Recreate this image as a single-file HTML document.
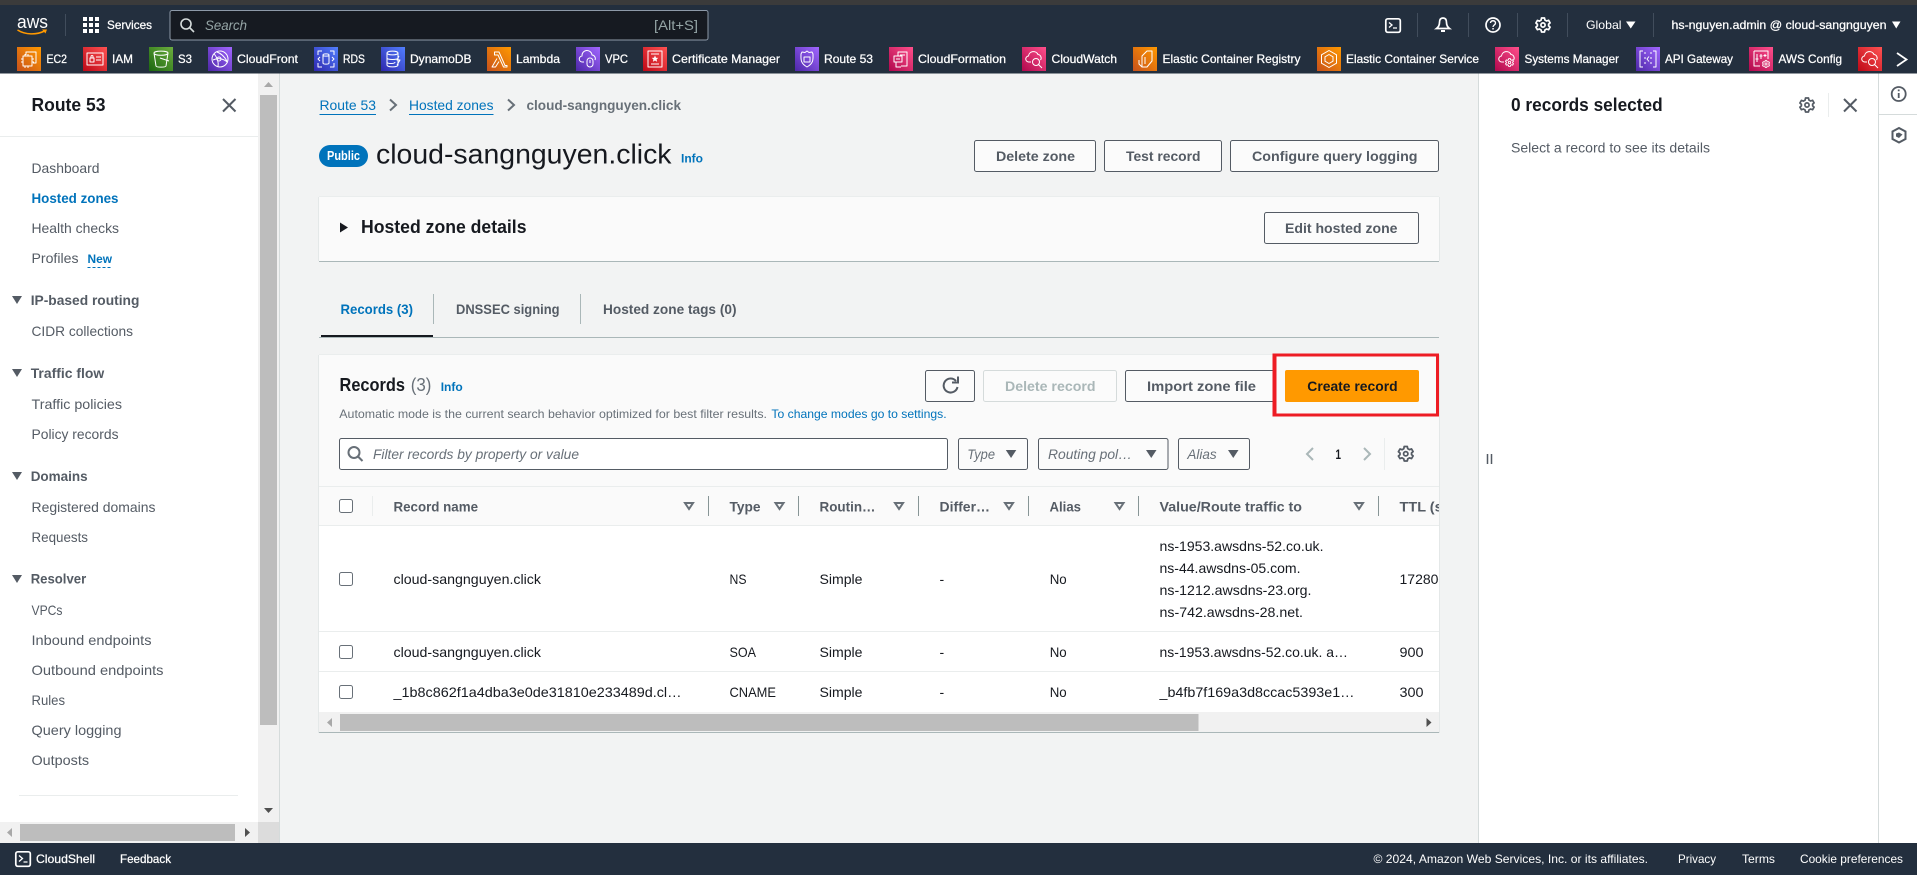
<!DOCTYPE html>
<html lang="en"><head><meta charset="utf-8"><title>Route 53 - Hosted zones</title>
<style>
html,body{margin:0;padding:0;width:1917px;height:875px;overflow:hidden;background:#f2f3f3}
svg{display:block;font-family:"Liberation Sans",Arial,sans-serif}
text{white-space:pre}
.w{fill:#fff;font-size:12px;font-weight:400;stroke:#fff;stroke-width:.25px}
.wn{fill:#fff;font-size:12px}
.n{fill:#545b64;font-size:14px}
.g{fill:#545b64;font-size:14px;font-weight:700}
.b{fill:#0073bb;font-size:14px}
.bb{fill:#0073bb;font-size:14px;font-weight:700}
.i{fill:#0073bb;font-size:12px;font-weight:700}
.h{fill:#16191f;font-size:18px;font-weight:700}
.t{fill:#16191f;font-size:14px}
.th{fill:#545b64;font-size:14px;font-weight:700}
.ph{fill:#687078;font-size:14px;font-style:italic}
.ic{fill:none;stroke:#fff;stroke-width:1;stroke-linejoin:round}
.btn{fill:#fbfbfb;stroke:#545b64;stroke-width:1}
.sep{stroke:#eaeded;stroke-width:1}
.dv{stroke:#879596;stroke-width:1}
.cb{fill:#fff;stroke:#687078;stroke-width:1}
.so{fill:none;stroke:#687078;stroke-width:2}
.ca{fill:#545b64}
</style></head><body>
<svg width="1917" height="875" viewBox="0 0 1917 875" xmlns="http://www.w3.org/2000/svg">
<defs>
<linearGradient id="o" x1="0" y1="1" x2="1" y2="0"><stop offset="0" stop-color="#c8511b"/><stop offset="1" stop-color="#ff9900"/></linearGradient>
<linearGradient id="r" x1="0" y1="1" x2="1" y2="0"><stop offset="0" stop-color="#bd0816"/><stop offset="1" stop-color="#ff5252"/></linearGradient>
<linearGradient id="e" x1="0" y1="1" x2="1" y2="0"><stop offset="0" stop-color="#1b660f"/><stop offset="1" stop-color="#6cae3e"/></linearGradient>
<linearGradient id="p" x1="0" y1="1" x2="1" y2="0"><stop offset="0" stop-color="#4d27a8"/><stop offset="1" stop-color="#a166ff"/></linearGradient>
<linearGradient id="u" x1="0" y1="1" x2="1" y2="0"><stop offset="0" stop-color="#2e27ad"/><stop offset="1" stop-color="#527fff"/></linearGradient>
<linearGradient id="k" x1="0" y1="1" x2="1" y2="0"><stop offset="0" stop-color="#b0084d"/><stop offset="1" stop-color="#ff4f8b"/></linearGradient>
<clipPath id="cardclip"><rect x="319" y="355" width="1120" height="378"/></clipPath>
<symbol id="gear" viewBox="0 0 16 16"><path d="M6.5 1h3l.4 2 1.7 1 2-.7 1.5 2.6-1.500 1.3v1.600l1.500 1.300-1.500 2.600-2-.7-1.700 1-.4 2h-3l-.4-2-1.700-1-2 .7L.9 10.200l1.500-1.300V7.300L.9 6l1.500-2.600 2 .7 1.700-1z" fill="none" stroke="currentColor" stroke-width="1.700" stroke-linejoin="round"/><circle cx="8" cy="8" r="2.100" fill="none" stroke="currentColor" stroke-width="1.700"/></symbol>
<symbol id="cw" viewBox="0 0 24 24"><path class="ic" d="M9 15H7a3 3 0 0 1-.5-6A5 5 0 0 1 16 7.500a3.500 3.500 0 0 1 2.500 5.500"/></symbol>
</defs>

<!-- page -->
<rect width="1917" height="875" fill="#f2f3f3"/>
<rect width="1917" height="5" fill="#3b3b3b"/>
<!-- top nav -->
<rect y="5" width="1917" height="68.500" fill="#232f3e"/>
<text x="17" y="28" fill="#fff" font-size="18" textLength="31" lengthAdjust="spacingAndGlyphs">aws</text>
<path d="M17.500 30c8 5 19 5 27 1" fill="none" stroke="#ff9900" stroke-width="1.600"/><path d="M42 29.500l5 0-1.500 4z" fill="#ff9900"/>
<path d="M65.500 14v22" stroke="#414d5c"/>
<g fill="#fff"><rect x="83" y="17" width="4" height="4"/><rect x="89" y="17" width="4" height="4"/><rect x="95" y="17" width="4" height="4"/><rect x="83" y="23" width="4" height="4"/><rect x="89" y="23" width="4" height="4"/><rect x="95" y="23" width="4" height="4"/><rect x="83" y="29" width="4" height="4"/><rect x="89" y="29" width="4" height="4"/><rect x="95" y="29" width="4" height="4"/></g>
<text class="w" x="107" y="29" textLength="45" lengthAdjust="spacingAndGlyphs">Services</text>
<rect x="170" y="10.500" width="538" height="29.500" rx="2" fill="#161a21" stroke="#8d99a8"/>
<circle cx="186" cy="24" r="5" fill="none" stroke="#d5dbdb" stroke-width="1.600"/><path d="M190 28l4 4" stroke="#d5dbdb" stroke-width="1.600"/>
<text x="205" y="30" fill="#95a5a6" font-size="14" font-style="italic" textLength="42" lengthAdjust="spacingAndGlyphs">Search</text>
<text x="654" y="30" fill="#95a5a6" font-size="14" textLength="44" lengthAdjust="spacingAndGlyphs">[Alt+S]</text>

<rect x="1385.800" y="18.800" width="14.500" height="13.500" rx="2" fill="none" stroke="#fff" stroke-width="1.700"/><path d="M1389 22.500l3 2.500-3 2.500M1393 28h4" fill="none" stroke="#fff" stroke-width="1.300"/>
<path d="M1417.500 13v24M1468.500 13v24M1517.500 13v24M1567.500 13v24M1653.500 13v24" stroke="#414d5c"/>
<path d="M1443 18c-2.500 0-3.500 2-3.500 4.500 0 3-1 4.500-3 6h13c-2-1.500-3-3-3-6 0-2.500-1-4.500-3.500-4.500z" fill="none" stroke="#fff" stroke-width="1.700"/><path d="M1441 31h4" stroke="#fff" stroke-width="2"/>
<circle cx="1493" cy="25" r="7" fill="none" stroke="#fff" stroke-width="1.700"/><path d="M1490.500 23c0-3 5-3 5 0 0 2-2.500 2-2.500 4" fill="none" stroke="#fff" stroke-width="1.400"/><rect x="1492.300" y="28" width="1.500" height="1.500" fill="#fff"/>
<use href="#gear" x="1535" y="17" width="16" height="16" color="#fff"/>
<text class="wn" x="1586" y="29" textLength="35.500" lengthAdjust="spacingAndGlyphs">Global</text>
<path d="M1626 21.500h9.500l-4.750 7z" fill="#fff"/>
<text class="w" x="1671.500" y="29" textLength="215" lengthAdjust="spacingAndGlyphs">hs-nguyen.admin @ cloud-sangnguyen</text>
<path d="M1892 21.500h8.500l-4.250 7z" fill="#fff"/>

<!-- favorites -->
<g transform="translate(17,47)"><rect width="24" height="24" fill="url(#o)"/><path class="ic" d="M9 8V5h10v11h-3M6 9h9v10H6zM8 7v2M11 7v2M8 19v2M11 19v2M4 12h2M4 15h2M15 12h2M15 15h2"/></g>
<text class="w" x="46.500" y="63" textLength="20.500" lengthAdjust="spacingAndGlyphs">EC2</text>
<g transform="translate(83,47)"><rect width="24" height="24" fill="url(#r)"/><path class="ic" d="M4 6h16v12H4zM7 11h4v4H7zM8 11V9.500a1 1 0 0 1 2 0V11M13 10h5M13 13h5"/></g>
<text class="w" x="112" y="63" textLength="21" lengthAdjust="spacingAndGlyphs">IAM</text>
<g transform="translate(149,47)"><rect width="24" height="24" fill="url(#e)"/><path class="ic" d="M5 6c0 3 14 3 14 0M5 6c0-2.500 14-2.500 14 0l-2 13c-.5 1.500-9.500 1.500-10 0zM11 11l9 3"/></g>
<text class="w" x="178" y="63" textLength="14" lengthAdjust="spacingAndGlyphs">S3</text>
<g transform="translate(208,47)"><rect width="24" height="24" fill="url(#p)"/><circle class="ic" cx="12" cy="12" r="8"/><path class="ic" d="M6 6.500c3 4 5 8 4 13M9 5c3 1 7 4 10 9M5 13c4-2 10-2 14 2"/><circle class="ic" cx="11" cy="12" r="2"/></g>
<text class="w" x="237" y="63" textLength="61" lengthAdjust="spacingAndGlyphs">CloudFront</text>
<g transform="translate(314,47)"><rect width="24" height="24" fill="url(#u)"/><path class="ic" d="M4 8V4h4M16 4h4v4M20 16v4h-4M8 20H4v-4M9 8c0-1.500 6-1.500 6 0v8c0 1.500-6 1.500-6 0zM9 8c0 1.500 6 1.500 6 0M6 10l-2 2 2 2M18 10l2 2-2 2"/></g>
<text class="w" x="343" y="63" textLength="22" lengthAdjust="spacingAndGlyphs">RDS</text>
<g transform="translate(381,47)"><rect width="24" height="24" fill="url(#u)"/><path class="ic" d="M6 6c0-2.500 11-2.500 11 0v12c0 2.500-11 2.500-11 0zM6 6c0 2.500 11 2.500 11 0M6 11c0 2 11 2 11 0M6 15c0 2 8 2 8 0M18 9l-2 4h3l-3 5"/></g>
<text class="w" x="410" y="63" textLength="61.500" lengthAdjust="spacingAndGlyphs">DynamoDB</text>
<g transform="translate(487,47)"><rect width="24" height="24" fill="url(#o)"/><path class="ic" d="M7.500 5H12l6 13.500h2V20h-3.500L11 8H7.500zM10 11.500 5 20h3.500l3.500-5.500"/></g>
<text class="w" x="516" y="63" textLength="44" lengthAdjust="spacingAndGlyphs">Lambda</text>
<g transform="translate(576,47)"><rect width="24" height="24" fill="url(#p)"/><path class="ic" d="M8 15H6.500a3 3 0 0 1-.5-6 5 5 0 0 1 10-1 3.500 3.500 0 0 1 3 5"/><rect class="ic" x="11" y="11" width="6" height="9" rx="3"/><path class="ic" d="M14 13v3"/></g>
<text class="w" x="605" y="63" textLength="23" lengthAdjust="spacingAndGlyphs">VPC</text>
<g transform="translate(643,47)"><rect width="24" height="24" fill="url(#r)"/><path class="ic" d="M5 4h14v16H5zM8 7h8M8 17h8"/><path d="M12 8.500l1 2.200 2.300.2-1.700 1.500.5 2.300-2.100-1.200-2.100 1.200.5-2.300-1.700-1.500 2.300-.2z" fill="#fff"/></g>
<text class="w" x="672" y="63" textLength="108" lengthAdjust="spacingAndGlyphs">Certificate Manager</text>
<g transform="translate(795,47)"><rect width="24" height="24" fill="url(#p)"/><path class="ic" d="M12 4l2 1.500 3-.5 1 2c0 5 1 9-6 13-7-4-6-8-6-13l1-2 3 .5z"/><path class="ic" d="M9 10h6v5H9z"/></g>
<text class="w" x="824" y="63" textLength="49" lengthAdjust="spacingAndGlyphs">Route 53</text>
<g transform="translate(889,47)"><rect width="24" height="24" fill="url(#k)"/><path class="ic" d="M9 9V5h9v14h-6M5 9h8v6H5zM7 15v5h5M7 12h4M11 8h5"/></g>
<text class="w" x="918" y="63" textLength="88" lengthAdjust="spacingAndGlyphs">CloudFormation</text>
<g transform="translate(1022,47)"><rect width="24" height="24" fill="url(#k)"/><use href="#cw" width="24" height="24"/><circle class="ic" cx="14" cy="15" r="3.500"/><path class="ic" d="M16.500 17.500L20 21"/></g>
<text class="w" x="1051.500" y="63" textLength="65.500" lengthAdjust="spacingAndGlyphs">CloudWatch</text>
<g transform="translate(1133,47)"><rect width="24" height="24" fill="url(#o)"/><path class="ic" d="M14 4h5v10l-5 6H9V9zM9 9v11M6 13v4l3 3M12 10v7"/></g>
<text class="w" x="1162.500" y="63" textLength="138" lengthAdjust="spacingAndGlyphs">Elastic Container Registry</text>
<g transform="translate(1317,47)"><rect width="24" height="24" fill="url(#o)"/><path class="ic" d="M12 3.500l7.500 4.300v8.400L12 20.500l-7.500-4.300V7.800z"/><path class="ic" d="M12 7.500l4 2.300v4.400l-4 2.300-4-2.300V9.800z"/></g>
<text class="w" x="1346" y="63" textLength="133" lengthAdjust="spacingAndGlyphs">Elastic Container Service</text>
<g transform="translate(1495,47)"><rect width="24" height="24" fill="url(#k)"/><use href="#cw" width="24" height="24"/><use href="#gear" x="10" y="11" width="9" height="9" color="#fff"/></g>
<text class="w" x="1524.500" y="63" textLength="94.500" lengthAdjust="spacingAndGlyphs">Systems Manager</text>
<g transform="translate(1636,47)"><rect width="24" height="24" fill="url(#p)"/><path class="ic" d="M7 4H4v16h3M17 4h3v16h-3M9 5v2M9 10v2M9 15v2M15 5v2M15 10v2M15 15v2M13 9.500L11 12l2 2.500"/></g>
<text class="w" x="1665" y="63" textLength="68" lengthAdjust="spacingAndGlyphs">API Gateway</text>
<g transform="translate(1749,47)"><rect width="24" height="24" fill="url(#k)"/><path class="ic" d="M5 4h14v8M5 4v15h6M8 7v8M12 7v5M16 7v3M6.500 12h3M10.500 9h3M14.500 8.500h3"/><use href="#gear" x="13" y="13" width="8" height="8" color="#fff"/></g>
<text class="w" x="1778.500" y="63" textLength="63.500" lengthAdjust="spacingAndGlyphs">AWS Config</text>
<g transform="translate(1858,47)"><rect width="24" height="24" fill="url(#r)"/><use href="#cw" width="24" height="24"/><circle class="ic" cx="14" cy="15" r="3.500"/><path class="ic" d="M16.500 17.500L20 21"/></g>
<path d="M1897 53l9.500 6.500-9.500 6.500" fill="none" stroke="#fff" stroke-width="1.800"/>

<!-- sidebar -->
<rect y="73.500" width="258" height="749" fill="#fff"/>
<rect x="258" y="73.500" width="21" height="770" fill="#f1f1f1"/>
<rect x="260" y="95" width="17" height="630" fill="#bdbdbd"/>
<path d="M268.500 82l4.500 5h-9z" fill="#a8a8a8"/><path d="M264 808h9l-4.500 5z" fill="#505050"/>
<rect y="822" width="258" height="21" fill="#f1f1f1"/><rect x="258" y="822" width="21" height="21" fill="#dcdcdc"/>
<rect x="20" y="824" width="215" height="17" fill="#bdbdbd"/>
<path d="M7 832.500l5-4.500v9z" fill="#a8a8a8"/><path d="M245 828l5 4.500-5 4.500z" fill="#505050"/>
<path d="M279.500 73.500V843" stroke="#d5dbdb"/>
<text class="h" x="31.500" y="111" textLength="74" lengthAdjust="spacingAndGlyphs">Route 53</text>
<path d="M223 99l12.500 12.500M235.500 99L223 111.500" stroke="#545b64" stroke-width="2"/>
<path d="M0 136.500h258" class="sep"/>
<g>
<text class="n" x="31.500" y="173" textLength="68" lengthAdjust="spacingAndGlyphs">Dashboard</text>
<text class="bb" x="31.500" y="203" textLength="87" lengthAdjust="spacingAndGlyphs">Hosted zones</text>
<text class="n" x="31.500" y="233" textLength="87.500" lengthAdjust="spacingAndGlyphs">Health checks</text>
<text class="n" x="31.500" y="263" textLength="47" lengthAdjust="spacingAndGlyphs">Profiles</text>
<text class="i" x="87.500" y="263" textLength="24.500" lengthAdjust="spacingAndGlyphs">New</text>
<path d="M87.500 267.500h24.500" stroke="#0073bb" stroke-dasharray="3 2"/>
<path d="M12 296h10l-5 8z" class="ca"/>
<text class="g" x="30.700" y="305" textLength="108.700" lengthAdjust="spacingAndGlyphs">IP-based routing</text>
<text class="n" x="31.500" y="336" textLength="101.500" lengthAdjust="spacingAndGlyphs">CIDR collections</text>
<path d="M12 369h10l-5 8z" class="ca"/>
<text class="g" x="30.700" y="378" textLength="73.500" lengthAdjust="spacingAndGlyphs">Traffic flow</text>
<text class="n" x="31.500" y="409" textLength="90.500" lengthAdjust="spacingAndGlyphs">Traffic policies</text>
<text class="n" x="31.500" y="439" textLength="87" lengthAdjust="spacingAndGlyphs">Policy records</text>
<path d="M12 472h10l-5 8z" class="ca"/>
<text class="g" x="30.700" y="481" textLength="57" lengthAdjust="spacingAndGlyphs">Domains</text>
<text class="n" x="31.500" y="512" textLength="124" lengthAdjust="spacingAndGlyphs">Registered domains</text>
<text class="n" x="31.500" y="542" textLength="56.500" lengthAdjust="spacingAndGlyphs">Requests</text>
<path d="M12 575h10l-5 8z" class="ca"/>
<text class="g" x="30.700" y="583.500" textLength="55.500" lengthAdjust="spacingAndGlyphs">Resolver</text>
<text class="n" x="31.500" y="615" textLength="31" lengthAdjust="spacingAndGlyphs">VPCs</text>
<text class="n" x="31.500" y="645" textLength="120" lengthAdjust="spacingAndGlyphs">Inbound endpoints</text>
<text class="n" x="31.500" y="675" textLength="132" lengthAdjust="spacingAndGlyphs">Outbound endpoints</text>
<text class="n" x="31.500" y="705" textLength="33.500" lengthAdjust="spacingAndGlyphs">Rules</text>
<text class="n" x="31.500" y="735" textLength="90" lengthAdjust="spacingAndGlyphs">Query logging</text>
<text class="n" x="31.500" y="765" textLength="57.500" lengthAdjust="spacingAndGlyphs">Outposts</text>
</g>
<path d="M19 795.500h219" class="sep"/>

<!-- breadcrumbs / header -->
<text class="b" x="319.500" y="110" textLength="56.500" lengthAdjust="spacingAndGlyphs">Route 53</text><path d="M319.500 114.500H376" stroke="#0073bb"/>
<path d="M390 99.500l6 5.500-6 5.500" fill="none" stroke="#687078" stroke-width="2"/>
<text class="b" x="409" y="110" textLength="84.500" lengthAdjust="spacingAndGlyphs">Hosted zones</text><path d="M409 114.500h84.500" stroke="#0073bb"/>
<path d="M508 99.500l6 5.500-6 5.500" fill="none" stroke="#687078" stroke-width="2"/>
<text x="526.500" y="110" fill="#687078" font-size="14" font-weight="700" textLength="154.500" lengthAdjust="spacingAndGlyphs">cloud-sangnguyen.click</text>
<rect x="319" y="145" width="49" height="22" rx="11" fill="#0073bb"/>
<text x="327" y="160" fill="#fff" font-size="13" font-weight="700" textLength="33" lengthAdjust="spacingAndGlyphs">Public</text>
<text x="376" y="163.500" fill="#16191f" font-size="28" textLength="295.500" lengthAdjust="spacingAndGlyphs">cloud-sangnguyen.click</text>
<text class="i" x="681" y="162.500" textLength="22" lengthAdjust="spacingAndGlyphs">Info</text>
<rect class="btn" x="974.500" y="140.500" width="121" height="31" rx="2"/><text class="g" x="996" y="161" textLength="79" lengthAdjust="spacingAndGlyphs">Delete zone</text>
<rect class="btn" x="1104.500" y="140.500" width="117" height="31" rx="2"/><text class="g" x="1126" y="161" textLength="74.500" lengthAdjust="spacingAndGlyphs">Test record</text>
<rect class="btn" x="1230.500" y="140.500" width="208" height="31" rx="2"/><text class="g" x="1252" y="161" textLength="165.500" lengthAdjust="spacingAndGlyphs">Configure query logging</text>

<!-- details card -->
<rect x="319" y="197" width="1120" height="65" fill="#fafafa"/>
<path d="M319 261.500h1120" stroke="#aab7b8"/><path d="M318.500 197v64M1439.500 197v64" stroke="#e4e8e8"/><path d="M319 196.500h1120" stroke="#eaeded"/>
<path d="M340 222.500l8 5-8 5z" fill="#16191f"/>
<text class="h" x="361" y="233" textLength="165.500" lengthAdjust="spacingAndGlyphs">Hosted zone details</text>
<rect class="btn" x="1264.500" y="212.500" width="154" height="31" rx="2"/><text class="g" x="1285" y="233" textLength="112.500" lengthAdjust="spacingAndGlyphs">Edit hosted zone</text>

<!-- tabs -->
<text class="bb" x="340.500" y="314" textLength="72.500" lengthAdjust="spacingAndGlyphs">Records (3)</text>
<path d="M433.500 294v30" stroke="#aab7b8"/>
<text class="g" x="456" y="314" textLength="103.500" lengthAdjust="spacingAndGlyphs">DNSSEC signing</text>
<path d="M580.500 294v30" stroke="#aab7b8"/>
<text class="g" x="603" y="314" textLength="133.500" lengthAdjust="spacingAndGlyphs">Hosted zone tags (0)</text>
<path d="M319 337.500h1120" stroke="#aab7b8"/><rect x="321" y="335" width="112" height="2" fill="#16191f"/>

<!-- records card -->
<g clip-path="url(#cardclip)">
<rect x="319" y="355" width="1120" height="378" fill="#fff"/>
<rect x="319" y="355" width="1120" height="170.500" fill="#fafafa"/>
<path d="M319 486.500h1120M319 525.500h1120M319 631.500h1120M319 671.500h1120" class="sep"/>
<text class="th" x="393.500" y="511.500" textLength="84.500" lengthAdjust="spacingAndGlyphs">Record name</text>
<text class="th" x="729.500" y="511.500" textLength="31" lengthAdjust="spacingAndGlyphs">Type</text>
<text class="th" x="819.500" y="511.500" textLength="56" lengthAdjust="spacingAndGlyphs">Routin…</text>
<text class="th" x="939.500" y="511.500" textLength="50.500" lengthAdjust="spacingAndGlyphs">Differ…</text>
<text class="th" x="1049.500" y="511.500" textLength="31.500" lengthAdjust="spacingAndGlyphs">Alias</text>
<text class="th" x="1159.500" y="511.500" textLength="142.500" lengthAdjust="spacingAndGlyphs">Value/Route traffic to</text>
<text class="th" x="1399.500" y="511.500" textLength="48" lengthAdjust="spacingAndGlyphs">TTL (s)</text>
<path d="M372.500 496v20" stroke="#eaeded"/>
<path d="M708.500 496v20M798.500 496v20M918.500 496v20M1028.500 496v20M1138.500 496v20M1378.500 496v20" class="dv"/>
<path class="so" d="M685 503h8l-4 6zM775.500 503h8l-4 6zM895 503h8l-4 6zM1005 503h8l-4 6zM1115.500 503h8l-4 6zM1355 503h8l-4 6z"/>
<rect class="cb" x="339.500" y="499.500" width="13" height="13" rx="2"/>
<rect class="cb" x="339.500" y="572.500" width="13" height="13" rx="2"/>
<rect class="cb" x="339.500" y="645.500" width="13" height="13" rx="2"/>
<rect class="cb" x="339.500" y="685.500" width="13" height="13" rx="2"/>
<text class="t" x="393.500" y="584" textLength="147.500" lengthAdjust="spacingAndGlyphs">cloud-sangnguyen.click</text>
<text class="t" x="729.500" y="584" textLength="17" lengthAdjust="spacingAndGlyphs">NS</text>
<text class="t" x="819.500" y="584" textLength="43" lengthAdjust="spacingAndGlyphs">Simple</text>
<text class="t" x="939.500" y="584">-</text>
<text class="t" x="1049.700" y="584" textLength="17" lengthAdjust="spacingAndGlyphs">No</text>
<text class="t" x="1159.500" y="551" textLength="164" lengthAdjust="spacingAndGlyphs">ns-1953.awsdns-52.co.uk.</text>
<text class="t" x="1159.500" y="573" textLength="141" lengthAdjust="spacingAndGlyphs">ns-44.awsdns-05.com.</text>
<text class="t" x="1159.500" y="595" textLength="152" lengthAdjust="spacingAndGlyphs">ns-1212.awsdns-23.org.</text>
<text class="t" x="1159.500" y="617" textLength="143.500" lengthAdjust="spacingAndGlyphs">ns-742.awsdns-28.net.</text>
<text class="t" x="1399.500" y="584">172800</text>
<text class="t" x="393.500" y="657" textLength="147.500" lengthAdjust="spacingAndGlyphs">cloud-sangnguyen.click</text>
<text class="t" x="729.500" y="657" textLength="26.500" lengthAdjust="spacingAndGlyphs">SOA</text>
<text class="t" x="819.500" y="657" textLength="43" lengthAdjust="spacingAndGlyphs">Simple</text>
<text class="t" x="939.500" y="657">-</text>
<text class="t" x="1049.700" y="657" textLength="17" lengthAdjust="spacingAndGlyphs">No</text>
<text class="t" x="1159.500" y="657" textLength="188.500" lengthAdjust="spacingAndGlyphs">ns-1953.awsdns-52.co.uk. a…</text>
<text class="t" x="1399.500" y="657" textLength="24" lengthAdjust="spacingAndGlyphs">900</text>
<text class="t" x="393.500" y="697" textLength="288" lengthAdjust="spacingAndGlyphs">_1b8c862f1a4dba3e0de31810e233489d.cl…</text>
<text class="t" x="729.500" y="697" textLength="46.500" lengthAdjust="spacingAndGlyphs">CNAME</text>
<text class="t" x="819.500" y="697" textLength="43" lengthAdjust="spacingAndGlyphs">Simple</text>
<text class="t" x="939.500" y="697">-</text>
<text class="t" x="1049.700" y="697" textLength="17" lengthAdjust="spacingAndGlyphs">No</text>
<text class="t" x="1159.500" y="697" textLength="195" lengthAdjust="spacingAndGlyphs">_b4fb7f169a3d8ccac5393e1…</text>
<text class="t" x="1399.500" y="697" textLength="24" lengthAdjust="spacingAndGlyphs">300</text>
<rect x="319" y="712" width="1120" height="20" fill="#f1f1f1"/>
<rect x="340" y="714" width="858.500" height="17" fill="#bdbdbd"/>
<path d="M327 722.500l5-4.500v9z" fill="#a8a8a8"/><path d="M1426.500 718l5 4.500-5 4.500z" fill="#505050"/>
</g>
<path d="M319 732.500h1120" stroke="#aab7b8"/>
<path d="M318.500 355v378M1439.500 355v378" stroke="#e4e8e8"/><path d="M319 354.500h1120" stroke="#eaeded"/>

<text class="h" x="339.500" y="391" textLength="65.500" lengthAdjust="spacingAndGlyphs">Records</text>
<text x="410.700" y="391" fill="#687078" font-size="18" textLength="20.700" lengthAdjust="spacingAndGlyphs">(3)</text>
<text class="i" x="440.700" y="391" textLength="22" lengthAdjust="spacingAndGlyphs">Info</text>
<text x="339.300" y="418" fill="#687078" font-size="12" textLength="427.700" lengthAdjust="spacingAndGlyphs">Automatic mode is the current search behavior optimized for best filter results.</text>
<text x="771.400" y="418" fill="#0073bb" font-size="12" textLength="175.200" lengthAdjust="spacingAndGlyphs">To change modes go to settings.</text>

<rect class="btn" x="925.500" y="370.500" width="49" height="31" rx="2"/>
<path d="M956 381a7 7 0 1 0 1.500 6" fill="none" stroke="#545b64" stroke-width="2"/><path d="M958 376.500v6h-6" fill="none" stroke="#545b64" stroke-width="2"/>
<rect x="983.500" y="370.500" width="133" height="31" rx="2" fill="#fbfbfb" stroke="#d5dbdb"/><text x="1005" y="391" fill="#aab7b8" font-size="14" font-weight="700" textLength="90.500" lengthAdjust="spacingAndGlyphs">Delete record</text>
<rect class="btn" x="1125.500" y="370.500" width="150" height="31" rx="2"/><text class="g" x="1147" y="391" textLength="109" lengthAdjust="spacingAndGlyphs">Import zone file</text>
<rect x="1285" y="370" width="134" height="32" rx="2" fill="#ff9900"/><text x="1307.300" y="391" fill="#16191f" font-size="14" font-weight="700" textLength="90.300" lengthAdjust="spacingAndGlyphs">Create record</text>
<g fill="#ed1c24"><rect x="1272.500" y="353.500" width="166.500" height="3"/><rect x="1272.500" y="413.500" width="166.500" height="3"/><rect x="1272.500" y="353.500" width="4" height="63"/><rect x="1436" y="353.500" width="3" height="63"/></g>

<rect x="339.500" y="438.500" width="608" height="31" rx="2" fill="#fff" stroke="#545b64"/>
<circle cx="354" cy="452.500" r="5.500" fill="none" stroke="#687078" stroke-width="2"/><path d="M358 456.500l4.500 4.500" stroke="#687078" stroke-width="2"/>
<text class="ph" x="373" y="459" textLength="206" lengthAdjust="spacingAndGlyphs">Filter records by property or value</text>
<rect x="958.500" y="438.500" width="69" height="31" rx="2" fill="#fbfbfb" stroke="#545b64"/><text class="ph" x="967.300" y="459" textLength="27.700" lengthAdjust="spacingAndGlyphs">Type</text><path d="M1005.800 450h10.500l-5.250 8z" class="ca"/>
<rect x="1038.500" y="438.500" width="129.500" height="31" rx="2" fill="#fbfbfb" stroke="#545b64"/><text class="ph" x="1048" y="459" textLength="84" lengthAdjust="spacingAndGlyphs">Routing pol…</text><path d="M1146 450h10.500l-5.250 8z" class="ca"/>
<rect x="1178.500" y="438.500" width="71" height="31" rx="2" fill="#fbfbfb" stroke="#545b64"/><text class="ph" x="1187.400" y="459" textLength="29.300" lengthAdjust="spacingAndGlyphs">Alias</text><path d="M1228 450h10.500l-5.250 8z" class="ca"/>
<path d="M1313 448l-6 6 6 6M1364 448l6 6-6 6" fill="none" stroke="#aab7b8" stroke-width="2"/>
<text x="1335.500" y="459" fill="#16191f" font-size="14" font-weight="700" textLength="5.500" lengthAdjust="spacingAndGlyphs">1</text>
<path d="M1384.500 438v32" stroke="#eaeded"/>
<use href="#gear" x="1397.500" y="445.500" width="16.500" height="16.500" color="#545b64"/>

<!-- split panel -->
<rect x="1478" y="73.500" width="400" height="769.500" fill="#fff"/>
<path d="M1478.500 73.500V843M1878.500 73.500V843" stroke="#d5dbdb"/>
<rect x="1879" y="73.500" width="38" height="769.500" fill="#fff"/>
<path d="M1879 114.500h38" stroke="#d5dbdb"/>
<circle cx="1898.700" cy="94" r="7" fill="none" stroke="#545b64" stroke-width="1.800"/><path d="M1898.700 93v5M1898.700 89.500v1.700" stroke="#545b64" stroke-width="1.800"/>
<path d="M1899 128l6.500 3.500v7.500l-6.500 3.500-6.500-3.500v-7.500z" fill="none" stroke="#545b64" stroke-width="2"/><path d="M1899 132.500l3.500 2-3.500 3.500-3-1.500v-3z" fill="#545b64"/>
<path d="M1487.500 454v10M1491.500 454v10" stroke="#545b64" stroke-width="1.500"/>
<text class="h" x="1511" y="111" textLength="151.700" lengthAdjust="spacingAndGlyphs">0 records selected</text>
<use href="#gear" x="1799" y="97" width="16" height="16" color="#545b64"/>
<path d="M1828.500 93v24" stroke="#eaeded"/>
<path d="M1844 99l12.500 12.500M1856.500 99L1844 111.500" stroke="#545b64" stroke-width="2"/>
<text class="n" x="1511" y="152.500" textLength="199" lengthAdjust="spacingAndGlyphs">Select a record to see its details</text>

<!-- footer -->
<rect y="843" width="1917" height="32" fill="#232f3e"/>
<rect x="15.800" y="851.800" width="14.500" height="14.500" rx="2" fill="none" stroke="#fff" stroke-width="1.700"/><path d="M19 855.500l3.500 3-3.500 3M23.500 862h4" fill="none" stroke="#fff" stroke-width="1.300"/>
<text class="w" x="36" y="863" textLength="59" lengthAdjust="spacingAndGlyphs">CloudShell</text>
<text class="w" x="120" y="863" textLength="51" lengthAdjust="spacingAndGlyphs">Feedback</text>
<text class="wn" x="1373.500" y="863" textLength="274.500" lengthAdjust="spacingAndGlyphs">© 2024, Amazon Web Services, Inc. or its affiliates.</text>
<text class="wn" x="1678" y="863" textLength="38" lengthAdjust="spacingAndGlyphs">Privacy</text>
<text class="wn" x="1742" y="863" textLength="33" lengthAdjust="spacingAndGlyphs">Terms</text>
<text class="wn" x="1800" y="863" textLength="103" lengthAdjust="spacingAndGlyphs">Cookie preferences</text>
</svg>
</body></html>
